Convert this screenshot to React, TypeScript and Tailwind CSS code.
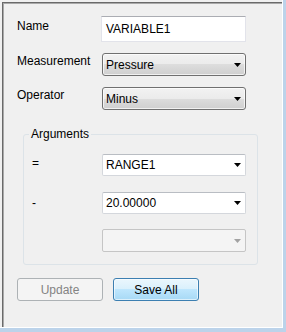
import React from "react"

const font = { fontFamily: '"Liberation Sans", Arial, sans-serif' }

function Arrow({ disabled = false }: { disabled?: boolean }) {
  return (
    <svg width="7" height="4" viewBox="0 0 7 4" className="shrink-0">
      <path d="M0 0H7L3.5 4Z" fill={disabled ? "#a2a2a2" : "#000"} />
    </svg>
  )
}

function DropList({ value }: { value: string }) {
  return (
    <div className="flex h-[23px] w-[144px] items-center justify-between rounded-[3px] border border-[#707070] bg-[linear-gradient(to_bottom,#f2f2f2_0%,#ebebeb_50%,#dddddd_50%,#cfcfcf_100%)] pl-[3px] pr-[4px] shadow-[inset_0_0_0_1px_rgba(255,255,255,0.7)]">
      <span>{value}</span>
      <Arrow />
    </div>
  )
}

function EditCombo({ value, disabled = false }: { value: string; disabled?: boolean }) {
  return (
    <div
      className={
        disabled
          ? "flex h-[23px] w-[144px] items-center justify-between rounded-[2px] border border-[#c5c5c5] bg-[#f4f4f4] pr-[4px]"
          : "flex h-[22px] w-[144px] items-center justify-between rounded-[2px] border border-[#d4d7dc] border-t-[#b9bdc3] bg-white pl-[3px] pr-[4px]"
      }
    >
      <span>{value}</span>
      <Arrow disabled={disabled} />
    </div>
  )
}

export default function App() {
  return (
    <div className="flex h-[332px] w-[286px] bg-[#bcd3ea] pb-[4px] pr-[3px] text-[12px] text-black" style={font}>
      <div className="h-[328px] w-[283px] border-b border-r border-white bg-[#f0f0f0] pl-[2px] pt-[2px]">
        <div className="h-full border-l border-t border-[#6a6a6a]">
          <div className="h-full border-l border-t border-[#a9a9a9] pl-[13px] leading-[14px]">
            <div className="mt-[12px] flex items-start">
              <span className="mt-[3px] w-[84px]">Name</span>
              <div className="flex h-[26px] w-[145px] items-center border border-[#e2e3ea] border-t-[#abadb3] bg-white pl-[4px]">
                VARIABLE1
              </div>
            </div>
            <div className="mt-[11px] flex items-start">
              <span className="mt-[1px] w-[85px]">Measurement</span>
              <DropList value="Pressure" />
            </div>
            <div className="mt-[11px] flex items-start">
              <span className="mt-[1px] w-[85px]">Operator</span>
              <DropList value="Minus" />
            </div>

            <fieldset className="ml-[6px] mt-[17px] w-[235px] rounded-[3px] border border-[#dce3e8] pb-[12px] pl-[8px]">
              <legend className="ml-[-3px] px-[2px]">Arguments</legend>
              <div className="mt-[13px] flex items-start">
                <span className="mt-[2px] w-[70px]">=</span>
                <EditCombo value="RANGE1" />
              </div>
              <div className="mt-[16px] flex items-start">
                <span className="mt-[4px] w-[70px]">-</span>
                <EditCombo value="20.00000" />
              </div>
              <div className="mt-[15px] flex items-start">
                <span className="w-[70px]" />
                <EditCombo value="" disabled />
              </div>
            </fieldset>

            <div className="mt-[13px] flex gap-[10px]">
              <button className="h-[23px] w-[86px] rounded-[3px] border border-[#adb2b5] bg-[#f4f4f4] text-[#838383]">
                Update
              </button>
              <button className="h-[23px] w-[86px] rounded-[3px] border border-[#3c7fb1] bg-[linear-gradient(to_bottom,#eaf6fd_0%,#d9f0fc_50%,#bee6fd_50%,#a7d9f5_100%)] shadow-[inset_0_0_0_1px_rgba(255,255,255,0.6)]">
                Save All
              </button>
            </div>
          </div>
        </div>
      </div>
    </div>
  )
}
